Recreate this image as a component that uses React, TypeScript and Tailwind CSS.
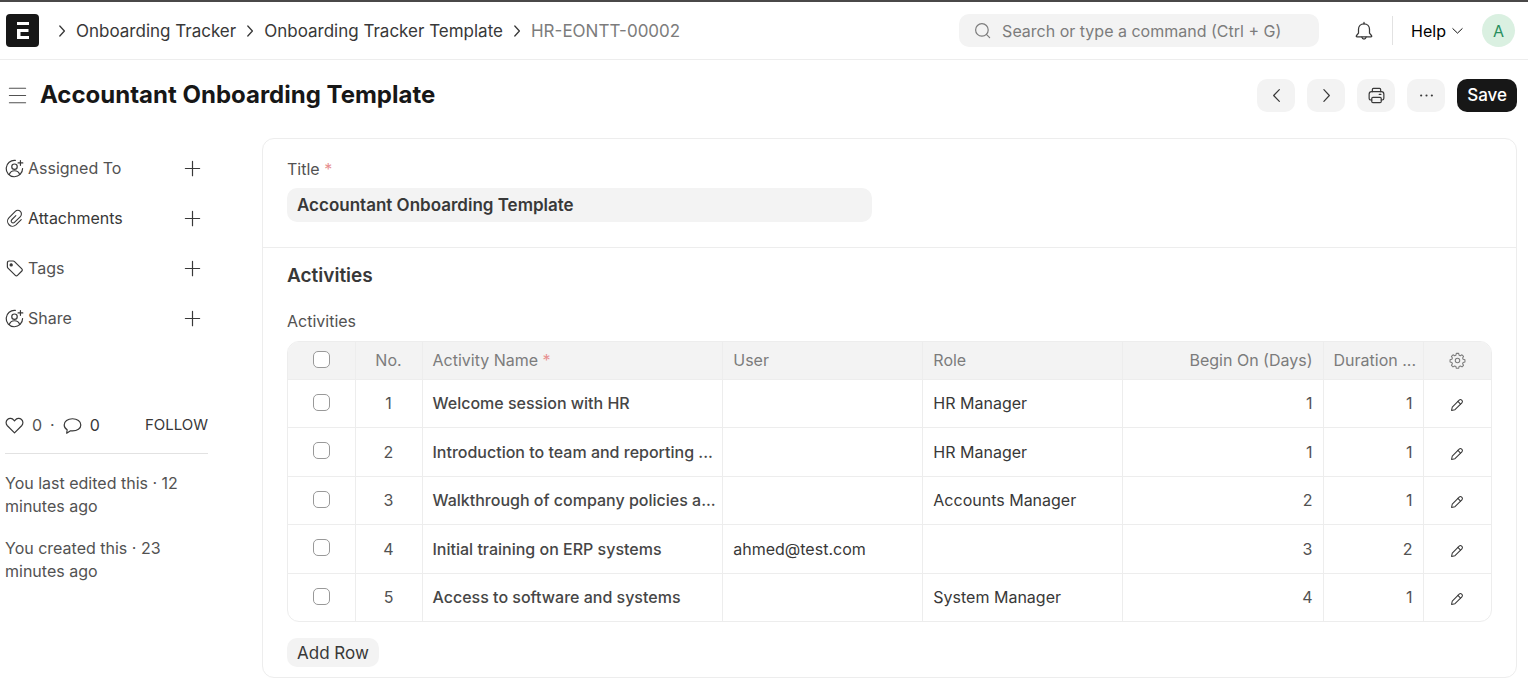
import type { ReactNode, SVGProps } from "react";

type IconProps = SVGProps<SVGSVGElement>;

function Icon({ children, ...props }: IconProps & { children: ReactNode }) {
  return (
    <svg
      viewBox="0 0 16 16"
      fill="none"
      stroke="currentColor"
      strokeWidth="1"
      strokeLinecap="round"
      strokeLinejoin="round"
      aria-hidden="true"
      {...props}
    >
      {children}
    </svg>
  );
}

const ChevronRight = (p: IconProps) => (
  <Icon {...p}>
    <path d="M5.8 3l4.6 5-4.6 5" />
  </Icon>
);

const ChevronLeft = (p: IconProps) => (
  <Icon {...p}>
    <path d="M10.4 3L5.6 8l4.8 5" />
  </Icon>
);

const ChevronDown = (p: IconProps) => (
  <Icon {...p}>
    <path d="M3 6L8 10.800 13 6" />
  </Icon>
);

const SearchIcon = (p: IconProps) => (
  <Icon {...p}>
    <circle cx="7.5" cy="7.5" r="5.3" />
    <path d="M11.3 11.3l2.7 2.7" />
  </Icon>
);

const BellIcon = (p: IconProps) => (
  <Icon {...p}>
    <path d="M8 2.2c-2.700 0-4.400 2-4.400 4.400v3.100L1.900 11.800c-.3.400 0 .9.500.9h11.200c.5 0 .8-.5.500-.9l-1.700-2.100V6.600c0-2.400-1.700-4.400-4.400-4.400z" />
    <path d="M8 1.100v1.100M6.300 12.900c.2.900.9 1.500 1.700 1.500s1.500-.6 1.700-1.500" />
  </Icon>
);

const MenuIcon = (p: IconProps) => (
  <Icon {...p}>
    <path d="M1.2 1.900h13.600M1.200 8h13.600M1.200 14.100h13.600" />
  </Icon>
);

const PrinterIcon = (p: IconProps) => (
  <Icon {...p}>
    <path d="M4.5 4.8V2.9c0-.5.4-.9.9-.9h5.2c.5 0 .9.4.9.9v1.9" />
    <path d="M4 11.8h-.8c-.8 0-1.400-.6-1.400-1.400V6.900c0-1.200.9-2.100 2.100-2.100h8.200c1.200 0 2.100.9 2.100 2.100v3.500c0 .8-.6 1.400-1.400 1.400H12" />
    <rect x="4" y="9.500" width="8" height="4.500" rx="1" />
    <path d="M10.300 7.100h1.400" />
  </Icon>
);

const DotsIcon = (p: IconProps) => (
  <Icon {...p}>
    <g fill="currentColor" stroke="none">
      <circle cx="3.500" cy="8" r="0.900" />
      <circle cx="8" cy="8" r="0.900" />
      <circle cx="12.500" cy="8" r="0.900" />
    </g>
  </Icon>
);

const PlusIcon = (p: IconProps) => (
  <Icon {...p}>
    <path d="M8 2v12M2 8h12" />
  </Icon>
);

const AssignIcon = (p: IconProps) => (
  <Icon {...p}>
    <path d="M8.700 1.200A6.900 6.900 0 1 0 14.800 8" />
    <circle cx="8" cy="6.500" r="2.300" />
    <path d="M3.600 13.100c.7-2 2.400-3.200 4.400-3.200s3.700 1.200 4.400 3.200" />
    <path d="M13 1.300v4M11 3.300h4" />
  </Icon>
);

const ClipIcon = (p: IconProps) => (
  <Icon {...p} viewBox="0 0 24 24" strokeWidth="1.400">
    <path d="M20.500 13.400l-6.700 6.700a6.300 6.300 0 0 1-8.900-8.900l8.100-8.100a4.500 4.500 0 0 1 6.400 6.400l-7.500 7.500a2.400 2.400 0 0 1-3.400-3.400l5.200-5.200" />
  </Icon>
);

const TagIcon = (p: IconProps) => (
  <Icon {...p}>
    <path d="M2 6.600V3.300C2 2.400 2.700 1.700 3.600 1.700h3.300c.4 0 .8.2 1.100.5l6.200 6.100c.5.500.5 1.300 0 1.800l-3.700 3.700c-.5.5-1.300.5-1.800 0L2.500 7.700c-.3-.3-.5-.7-.5-1.100z" />
    <circle cx="5.200" cy="5" r="0.900" fill="currentColor" />
  </Icon>
);

const HeartIcon = (p: IconProps) => (
  <Icon {...p}>
    <path d="M8 14.200L2 8.200C.5 6.600.6 4.200 2.100 2.900c1.600-1.400 4-1.100 5.300.5l.6.8.6-.8c1.300-1.600 3.700-1.900 5.300-.5 1.500 1.300 1.600 3.700.1 5.300z" />
  </Icon>
);

const CommentIcon = (p: IconProps) => (
  <Icon {...p}>
    <path d="M8 2.300c-4 0-7 2.200-7 5.200 0 1.700.9 3.100 2.500 4.100l-.4 2.900 3.200-2c.5.1 1.100.1 1.700.1 4 0 7-2.100 7-5.100S12 2.300 8 2.300z" />
  </Icon>
);

const GearIcon = (p: IconProps) => (
  <Icon {...p}>
    <circle cx="8" cy="8" r="2.100" />
    <path d="M6.900 1.300h2.200l.4 1.700 1.200.5 1.500-.9 1.500 1.500-.9 1.500.5 1.200 1.700.4v2.200l-1.700.4-.5 1.200.9 1.500-1.500 1.500-1.500-.9-1.200.5-.4 1.700H6.900l-.4-1.700-1.200-.5-1.500.9-1.500-1.500.9-1.500-.5-1.200-1.700-.4V7.200l1.700-.4.5-1.200-.9-1.500 1.500-1.500 1.500.9 1.200-.5z" />
  </Icon>
);

const PencilIcon = (p: IconProps) => (
  <Icon {...p} strokeWidth="1.200">
    <path d="M1.800 14.200l.8-3.900 7.900-7.900c.8-.8 2-.8 2.800 0l.3.3c.8.800.8 2 0 2.800l-7.900 7.900z" />
    <path d="M9 3.900L12.100 7" />
  </Icon>
);

const Required = () => <span className="text-[#e79090]">*</span>;

const sidebarItems = [
  { label: "Assigned To", icon: AssignIcon, tone: "text-[#525252]" },
  { label: "Attachments", icon: ClipIcon, tone: "text-[#383838]" },
  { label: "Tags", icon: TagIcon, tone: "text-[#525252]" },
  { label: "Share", icon: AssignIcon, tone: "text-[#525252]" },
];

const activities = [
  { name: "Welcome session with HR", user: "", role: "HR Manager", begin: 1, duration: 1 },
  { name: "Introduction to team and reporting ...", user: "", role: "HR Manager", begin: 1, duration: 1 },
  { name: "Walkthrough of company policies a...", user: "", role: "Accounts Manager", begin: 2, duration: 1 },
  { name: "Initial training on ERP systems", user: "ahmed@test.com", role: "", begin: 3, duration: 2 },
  { name: "Access to software and systems", user: "", role: "System Manager", begin: 4, duration: 1 },
];

const checkbox =
  "block mx-auto size-[17px] appearance-none rounded-[5px] border border-[#999999] bg-white checked:bg-[#171717]";
const toolButton =
  "flex h-[33px] w-[38px] items-center justify-center rounded-[10px] bg-[#f3f3f3] text-[#383838]";

function Navbar() {
  return (
    <header className="flex h-[60px] items-center border-t-2 border-b border-t-[#4a4848] border-b-[#ededed] pr-[13px] pl-1.5">
      <a href="#home" aria-label="Home" className="mr-[15px]">
        <svg viewBox="0 0 33 33" className="size-[33px]" aria-hidden="true">
          <rect width="33" height="33" rx="4" fill="#171717" />
          <path d="M11 8h12v3H11zM11 15h11.500v3h-8v4H23v3H11z" fill="#fff" />
        </svg>
      </a>
      <nav aria-label="Breadcrumb" className="flex items-center gap-1.5 text-[17px] leading-6 text-[#383838]">
        <ChevronRight className="size-4" strokeWidth="1.300" />
        <a href="#tracker">Onboarding Tracker</a>
        <ChevronRight className="size-4" strokeWidth="1.300" />
        <a href="#template">Onboarding Tracker Template</a>
        <ChevronRight className="size-4" strokeWidth="1.300" />
        <a href="#record" className="text-[#7c7c7c]">HR-EONTT-00002</a>
      </nav>
      <label className="ml-auto flex h-[33px] w-[360px] items-center gap-2.5 rounded-[10px] bg-[#f3f3f3] px-3.5 text-[#7c7c7c]">
        <SearchIcon className="size-[19px] shrink-0" />
        <input
          type="text"
          aria-label="Search"
          placeholder="Search or type a command (Ctrl + G)"
          className="min-w-0 flex-1 bg-transparent text-base outline-none placeholder:text-[#7c7c7c]"
        />
      </label>
      <button aria-label="Notifications" className="ml-[35px] text-[#383838]">
        <BellIcon className="size-5" />
      </button>
      <div className="mx-[18px] h-[29px] w-px bg-[#e2e2e2]" />
      <button className="flex items-center gap-1 text-base text-black">
        Help
        <ChevronDown className="size-[15px]" />
      </button>
      <button
        aria-label="Account"
        className="ml-[17px] flex size-[33px] items-center justify-center rounded-full bg-[#daf0e1] text-base text-[#278f5e]"
      >
        A
      </button>
    </header>
  );
}

function PageHead() {
  return (
    <div className="flex h-[70px] items-center pr-[11px] pl-2">
      <button aria-label="Toggle sidebar" className="mr-[13px] text-[#525252]">
        <MenuIcon className="size-[19px]" />
      </button>
      <h1 className="text-2xl font-bold text-[#171717]">Accountant Onboarding Template</h1>
      <div className="ml-auto flex items-center gap-3">
        <button aria-label="Previous" className={toolButton}>
          <ChevronLeft className="size-[19px]" />
        </button>
        <button aria-label="Next" className={toolButton}>
          <ChevronRight className="size-[19px]" />
        </button>
        <button aria-label="Print" className={toolButton}>
          <PrinterIcon className="size-[19px]" />
        </button>
        <button aria-label="More" className={toolButton}>
          <DotsIcon className="size-[19px]" />
        </button>
        <button className="h-[33px] rounded-[10px] bg-[#171717] px-2.5 text-[17px] leading-6 font-medium text-white">
          Save
        </button>
      </div>
    </div>
  );
}

function Sidebar() {
  return (
    <aside className="w-[203px] shrink-0 pt-[13px] text-base text-[#525252]">
      <ul>
        {sidebarItems.map(({ label, icon: ItemIcon, tone }) => (
          <li key={label} className="flex h-[50px] items-center">
            <ItemIcon className="mr-1 size-[19px] text-[#383838]" />
            <span className={tone}>{label}</span>
            <button aria-label={`Add ${label}`} className="mr-1.5 ml-auto text-[#383838]">
              <PlusIcon className="size-[19px]" />
            </button>
          </li>
        ))}
      </ul>
      <div className="mt-[70px] flex items-center border-b border-[#e2e2e2] pb-4">
        <button className="flex items-center gap-2">
          <HeartIcon className="size-[19px] text-[#383838]" />0
        </button>
        <span className="mx-2">·</span>
        <button className="flex items-center gap-2 text-[#383838]">
          <CommentIcon className="size-[19px]" />0
        </button>
        <button className="ml-auto text-[15px] text-[#383838]">FOLLOW</button>
      </div>
      <p className="mt-[18px] leading-[23px]">You last edited this · 12 minutes ago</p>
      <p className="mt-[19px] leading-[23px]">You created this · 23 minutes ago</p>
    </aside>
  );
}

function ActivitiesTable() {
  return (
    <div className="overflow-hidden rounded-[12px] border border-[#ededed]">
      <table className="w-full table-fixed text-base text-[#383838] [&_td+td]:border-l [&_td]:border-[#ededed] [&_th+th]:border-l [&_th]:border-[#ededed]">
        <colgroup>
          <col className="w-[67px]" />
          <col className="w-[67px]" />
          <col className="w-[25%]" />
          <col />
          <col />
          <col />
          <col className="w-[100px]" />
          <col className="w-[68px]" />
        </colgroup>
        <thead className="bg-[#f3f3f3] text-left text-[#7c7c7c] [&_th]:font-normal">
          <tr className="h-[37px]">
            <th className="pb-0.5">
              <input type="checkbox" aria-label="Select all rows" className={checkbox} />
            </th>
            <th className="text-center">No.</th>
            <th className="px-2.5">Activity Name <Required /></th>
            <th className="px-2.5">User</th>
            <th className="px-2.5">Role</th>
            <th className="px-2.5 text-right">Begin On (Days)</th>
            <th className="pl-2.5 whitespace-nowrap">Duration ...</th>
            <th>
              <button aria-label="Configure columns" className="mx-auto block">
                <GearIcon className="size-[17px]" />
              </button>
            </th>
          </tr>
        </thead>
        <tbody>
          {activities.map((row, i) => (
            <tr key={row.name} className="h-12 border-t border-[#ededed] even:h-[49px]">
              <td className="pb-0.5">
                <input type="checkbox" aria-label={`Select row ${i + 1}`} className={checkbox} />
              </td>
              <td className="text-center text-[#525252]">{i + 1}</td>
              <td className="pl-2.5 font-medium whitespace-nowrap text-[#464646]">{row.name}</td>
              <td className="truncate px-2.5">{row.user}</td>
              <td className="truncate px-2.5">{row.role}</td>
              <td className="px-2.5 text-right text-[#525252]">{row.begin}</td>
              <td className="px-2.5 text-right text-[#525252]">{row.duration}</td>
              <td className="pt-1">
                <button aria-label={`Edit row ${i + 1}`} className="mx-auto block">
                  <PencilIcon className="size-3.5" />
                </button>
              </td>
            </tr>
          ))}
        </tbody>
      </table>
    </div>
  );
}

export default function App() {
  return (
    <div className="min-h-screen bg-white font-['Inter',sans-serif]">
      <Navbar />
      <PageHead />
      <div className="flex gap-[54px] pr-[11px] pb-4 pl-[5px]">
        <Sidebar />
        <main className="mt-2 min-w-0 flex-1 rounded-[12px] border border-[#ededed]">
          <section className="grid grid-cols-2 gap-9 border-b border-[#ededed] px-6 pt-[18px] pb-[25px]">
            <div>
              <label htmlFor="title" className="block text-base text-[#525252]">
                Title <Required />
              </label>
              <input
                id="title"
                type="text"
                defaultValue="Accountant Onboarding Template"
                className="mt-[7px] h-[34px] w-full rounded-[10px] bg-[#f3f3f3] px-2.5 text-[17px] font-semibold text-[#383838] outline-none"
              />
            </div>
          </section>
          <section className="px-6 pt-3 pb-2.5">
            <h2 className="text-[19px] leading-8 font-semibold text-[#383838]">Activities</h2>
            <p className="mt-[17px] mb-2 text-base text-[#525252]">Activities</p>
            <ActivitiesTable />
            <button className="mt-4 h-[29px] rounded-[10px] bg-[#f3f3f3] px-2.5 text-[17px] leading-6 text-[#383838]">
              Add Row
            </button>
          </section>
        </main>
      </div>
    </div>
  );
}
